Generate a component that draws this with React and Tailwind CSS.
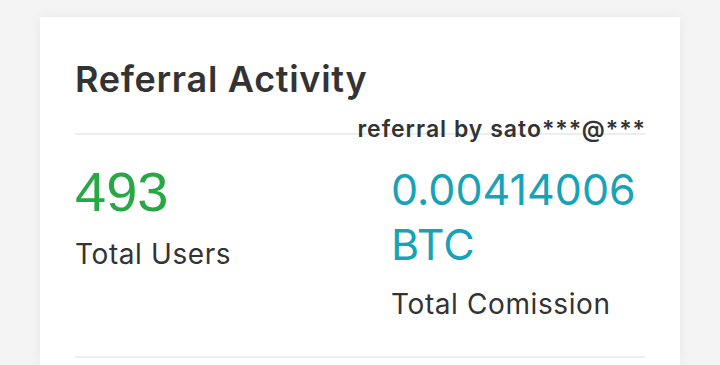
export default function App() {
  return (
    <div className="h-[365px] w-[720px] bg-[#f4f4f4] pt-[17px] pl-[40px] overflow-hidden" style={{ fontFamily: "Inter, sans-serif" }}>
      <div className="w-[640px] h-[348px] bg-white shadow-[0_0_12px_rgba(0,0,0,0.06)] px-[35px] pt-[40px]">
        <h2 className="text-[36px] leading-[44px] font-semibold text-[#333333] tracking-[0.7px]">Referral Activity</h2>
        <div className="mt-[32px] border-t-2 border-[#eeeeee]" />
        <div className="flex justify-end -mt-[19px]">
          <span className="text-[23px] leading-[26px] font-semibold text-[#333333] tracking-[1px] -mr-[1px]">referral by sato***@***</span>
        </div>
        <div className="flex mt-[20px]">
          <div className="w-[316px]">
            <div className="text-[56px] leading-[60px] text-[#28a745]" style={{ fontFamily: "'Liberation Sans', Arial, sans-serif" }}>493</div>
            <div className="mt-[15px] text-[28px] leading-[34px] text-[#333333] tracking-[0.6px]">Total Users</div>
          </div>
          <div>
            <div className="text-[43px] leading-[55px] text-[#17a2b8]">0.00414006<br />BTC</div>
            <div className="mt-[15px] text-[28px] leading-[34px] text-[#333333] tracking-[0.6px]">Total Comission</div>
          </div>
        </div>
        <div className="mt-[35px] border-t-2 border-[#eeeeee]" />
      </div>
    </div>
  );
}
